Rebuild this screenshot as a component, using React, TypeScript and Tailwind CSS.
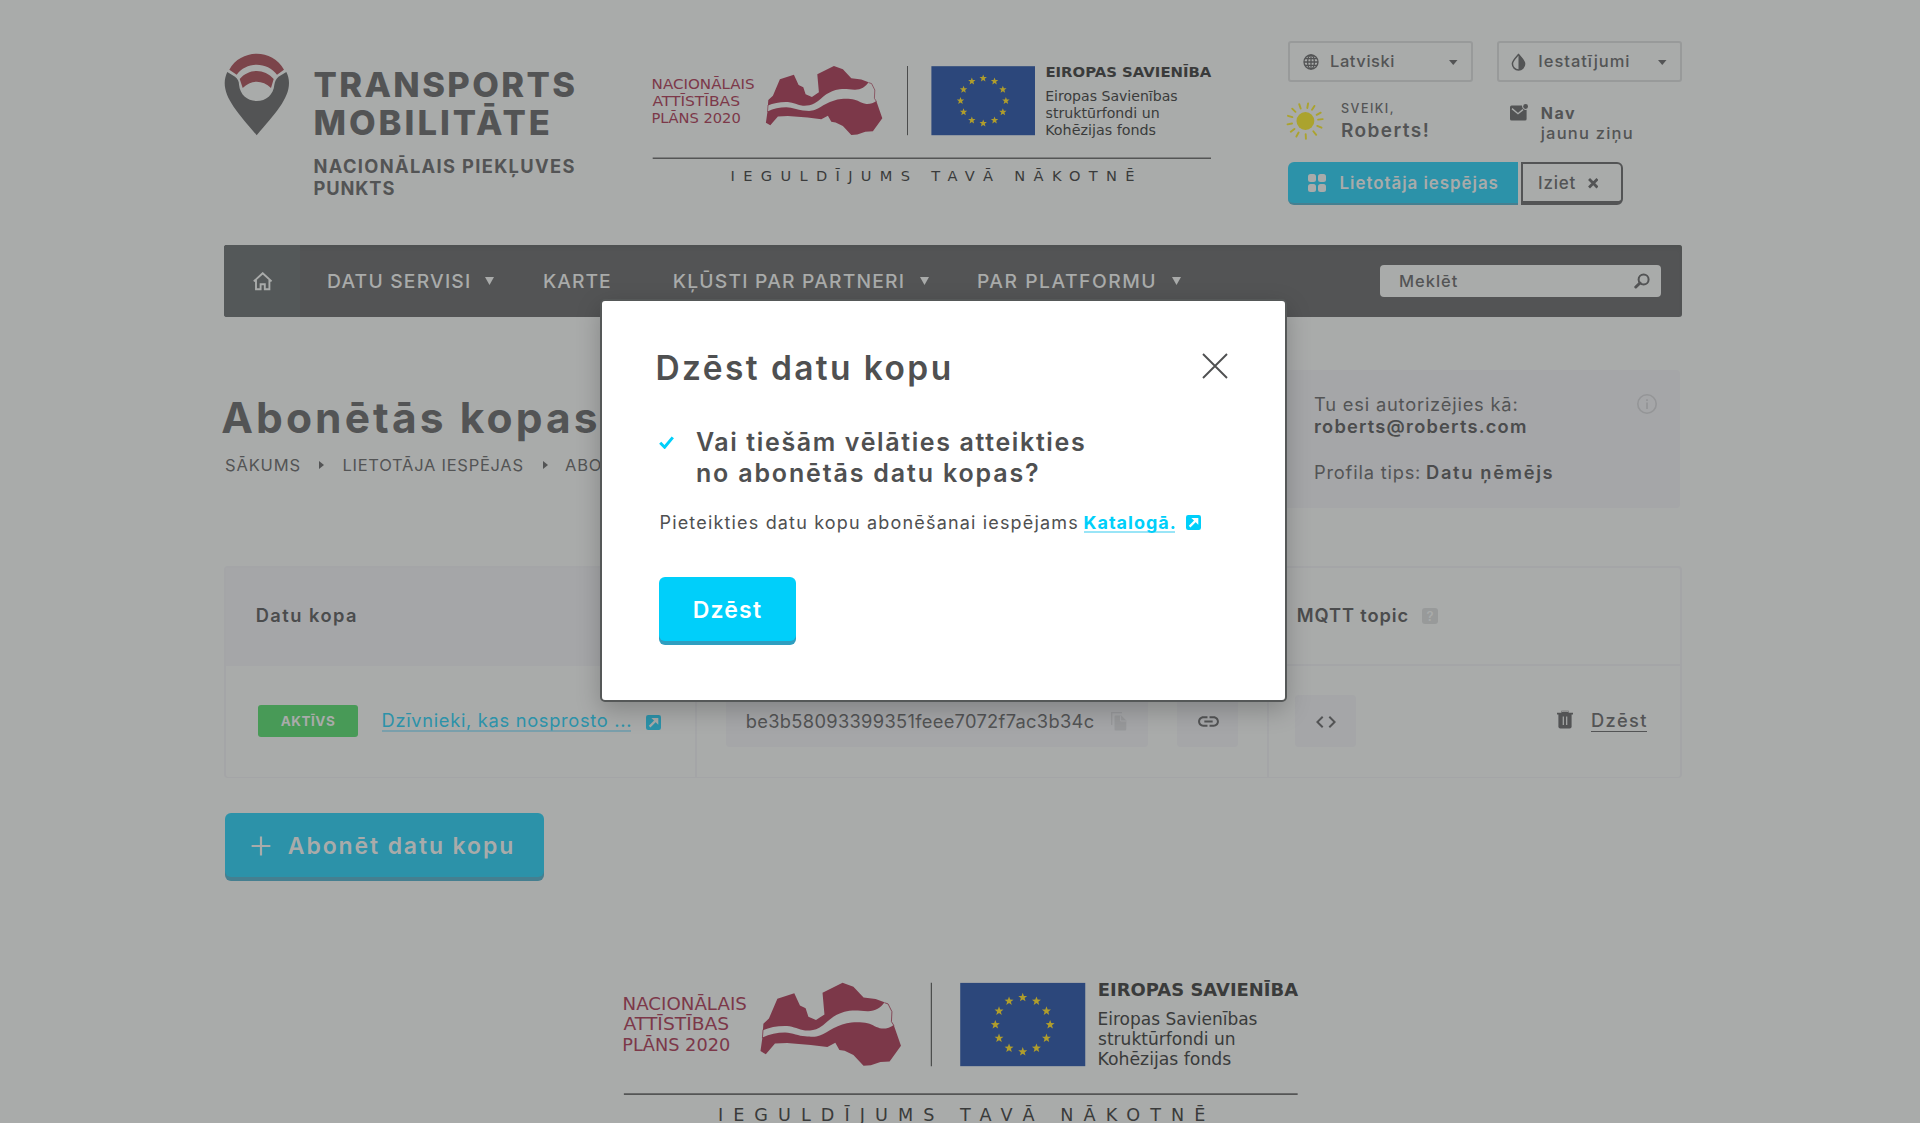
import type { ReactNode } from "react";
import { MdCode, MdLink } from "react-icons/md";

function star(cx: number, cy: number, r: number) {
  return Array.from({ length: 10 }, (_, i) => {
    const a = (Math.PI / 5) * i - Math.PI / 2;
    const q = i % 2 ? r * 0.42 : r;
    return `${(cx + Math.cos(a) * q).toFixed(2)},${(cy + Math.sin(a) * q).toFixed(2)}`;
  }).join(" ");
}

function FundLogo({ className }: { className: string }) {
  const sans = "font-['DejaVu_Sans',sans-serif]";
  return (
    <svg viewBox="652 58 560 130" className={`block shrink-0 ${className}`}>
      <g className={sans} fontSize="14.7" fill="#7c3849">
        <text x="651.6" y="88.5" textLength="103" lengthAdjust="spacingAndGlyphs">NACIONĀLAIS</text>
        <text x="652.4" y="105.5" textLength="87.6" lengthAdjust="spacingAndGlyphs">ATTĪSTĪBAS</text>
        <text x="651.4" y="122.9" textLength="89.4" lengthAdjust="spacingAndGlyphs">PLĀNS 2020</text>
      </g>
      <g fill="#7c3849" transform="translate(-0.4 0)">
        <path d="M780.3 79.3 794.3 74.7 799 85 803.7 87.3 806 94.3 812.3 97 819.3 92.3 817.7 74.3 834.3 66 843.3 69.3 851.7 78.3 861.7 79.6 869 82.3C866 87 861 89.9 855 89.7C849 89.4 846 88.6 840 89.3C834 90.2 830.5 92 826.7 94.3C822.5 97 819.5 101 815 103.3C811 105.4 807 105.9 803.3 105.7C798 105 794 102.4 788.3 102C781 101.7 774 103 768.3 105.4L768.7 100 773.3 95.7Z" />
        <path d="M767.9 111.5C774 108.6 780 107.3 786.7 107.3C793 107.6 798 110.2 803.3 110.5C809 111 812 111.2 815.5 109.8C819.5 108.4 822.5 105.7 826.7 103.7C831.5 101.5 836.5 99.4 841.7 99C846 98.7 851 98.7 855 99.7C859.5 100.8 862.5 103.6 866.7 104C870.5 104.2 874 103.2 876.7 101L882.7 118.3 873.3 131.3 865.7 131.7 857.7 134.5 851.7 134.9 843.3 126 836 122.5 831.7 121.7 828.3 115.7 821.7 119.3 808 117.6 788.3 116 778.3 116.5 770.7 125.3 766.3 122.7Z" />
        <path d="M869 82.6 872 83.6 875.2 90 874.8 98.3 876.9 101.6M768.4 105 767.9 112" fill="none" stroke="#7c3849" strokeWidth="0.7" />
      </g>
      <path d="M907.5 66V135.2" stroke="#4b4c4c" strokeWidth="1" />
      <rect x="931.4" y="66.2" width="103.6" height="69" fill="#2c477b" />
      <g fill="#b09d2c">
        {Array.from({ length: 12 }, (_, i) => (
          <polygon
            key={i}
            points={star(983.2 + Math.sin((i * Math.PI) / 6) * 22.7, 100.8 - Math.cos((i * Math.PI) / 6) * 22.5, 3.9)}
          />
        ))}
      </g>
      <g className={sans} fill="#3a3b3b" fontSize="14">
        <text x="1045.4" y="77.3" fontWeight="700" fontSize="14.2" textLength="166" lengthAdjust="spacingAndGlyphs">EIROPAS SAVIENĪBA</text>
        <text x="1045.2" y="101.1" textLength="132.5" lengthAdjust="spacingAndGlyphs">Eiropas Savienības</text>
        <text x="1045.6" y="117.8" textLength="114" lengthAdjust="spacingAndGlyphs">struktūrfondi un</text>
        <text x="1045.2" y="134.5" textLength="110.8" lengthAdjust="spacingAndGlyphs">Kohēzijas fonds</text>
        <text x="730.6" y="180.6" fontSize="14.6" textLength="404" lengthAdjust="spacing">IEGULDĪJUMS TAVĀ NĀKOTNĒ</text>
      </g>
      <path d="M652.7 158.3H1211" stroke="#545555" strokeWidth="1.4" />
    </svg>
  );
}

function BrandMark() {
  return (
    <svg viewBox="224 53 66 83" className="h-[83px] w-[66px] shrink-0">
      <g fill="#7b444a">
        <path d="M229.3 69.7C241 48.5 272.5 48.5 284 69.7L277 74.7C267.5 61.3 246 61.3 236.7 74.7Z" />
        <path d="M239.7 79C249 68.3 264.5 68.3 273.7 79L271 88C262.5 79.6 251 79.6 242.7 88Z" />
      </g>
      <path
        fill="#535455"
        d="M227.3 72 235 76.7C238 79 239 82 239 84.5C240 95 247.5 101 256.7 101C266 101 273.5 95 274.4 84.5C275 81 276 79 278.5 76.7L286.3 72C288 75 289 79 289 83C289 99 275 113.5 256.7 135.3C238.5 113.5 224.7 99 224.7 83C224.7 79 225.8 75 227.3 72Z"
      />
    </svg>
  );
}

function Sun() {
  const rays = [32, 62, 84, 112, 141, 177, 209, 233, 259, 287, 314, 341, 10];
  return (
    <svg viewBox="-19 -20 38 40" className="h-[40px] w-[38px] shrink-0">
      <circle cx="0.4" cy="0" r="8.9" fill="#aba32e" />
      <g stroke="#aba32e" strokeWidth="1.9" strokeLinecap="round">
        {rays.map((a) => (
          <path key={a} d="M0 -13.2V-17.8" transform={`rotate(${a})`} />
        ))}
      </g>
    </svg>
  );
}

function Caret({ className }: { className: string }) {
  return (
    <svg viewBox="0 0 9 8" preserveAspectRatio="none" className={`shrink-0 fill-current ${className}`}>
      <path d="M0 0H9L4.5 8Z" />
    </svg>
  );
}

function External({ className }: { className: string }) {
  return (
    <svg viewBox="0 0 15 15" className="size-[15px] shrink-0">
      <rect width="15" height="15" rx="2.2" className={className} />
      <path d="M3.6 11.6 9.6 5.6" stroke="currentColor" strokeWidth="2.2" fill="none" />
      <path d="M5.4 3H12.3V9.8Z" fill="currentColor" />
    </svg>
  );
}

function SelectBox({ icon, label }: { icon: ReactNode; label: ReactNode }) {
  return (
    <div className="flex h-[41px] w-[185px] items-center rounded-[3px] border-2 border-[#989a9a] pr-[13.5px] pl-[12.5px]">
      {icon}
      {label}
      <Caret className="mt-px ml-auto h-[5px] w-[8.5px]" />
    </div>
  );
}

function Header() {
  return (
    <header className="flex h-[245px]">
      <div className="flex w-[428px] pt-[53px]">
        <BrandMark />
        <div className="ml-[23.4px] pt-[13px] whitespace-nowrap">
          <div className="text-[34.5px] leading-[38px] font-extrabold tracking-[2.4px]">TRANSPORTS</div>
          <div className="text-[34.5px] leading-[38px] font-extrabold tracking-[3px]">MOBILITĀTE</div>
          <div className="mt-[13.9px] text-[18.3px] leading-[21.8px] font-bold tracking-[1.34px]">NACIONĀLAIS PIEKĻUVES</div>
          <div className="text-[18.3px] leading-[21.8px] font-bold tracking-[0.9px]">PUNKTS</div>
        </div>
      </div>
      <FundLogo className="mt-[58px] h-[130px] w-[560px]" />
      <div className="ml-[76px] w-[394px] pt-[41px] whitespace-nowrap">
        <div className="flex justify-between">
          <SelectBox
            icon={
              <svg viewBox="0 0 16 16" className="size-[16px] shrink-0">
                <g fill="none" stroke="currentColor" strokeWidth="1.3">
                  <circle cx="8" cy="8" r="7" />
                  <ellipse cx="8" cy="8" rx="3.4" ry="7" />
                  <path d="M1 8H15M8 1V15M2 4.6H14M2 11.4H14" />
                </g>
              </svg>
            }
            label={<span className="ml-[11.5px] text-[16.5px] font-medium tracking-[0.56px]">Latviski</span>}
          />
          <SelectBox
            icon={
              <svg viewBox="0 0 15 18" className="-ml-px h-[18px] w-[15px] shrink-0">
                <path d="M7.5 1.6C4.5 5 1.4 7.6 1.4 10.8A6.1 6.1 0 0 0 13.6 10.8C13.6 7.6 10.5 5 7.5 1.6Z" fill="none" stroke="currentColor" strokeWidth="1.5" />
                <path d="M7.5 1.6C10.5 5 13.6 7.6 13.6 10.8A6.1 6.1 0 0 1 7.5 16.9Z" fill="currentColor" />
              </svg>
            }
            label={<span className="ml-[12.8px] text-[16.5px] font-medium tracking-[0.97px]">Iestatījumi</span>}
          />
        </div>
        <div className="mt-[18.5px] flex h-[61.5px]">
          <div className="flex w-[222px]">
            <div className="-ml-[2px]">
              <Sun />
            </div>
            <div className="ml-[17px] pt-px">
              <div className="text-[12.5px] leading-[14px] font-medium tracking-[1.47px]">SVEIKI,</div>
              <div className="mt-[3.4px] text-[19px] leading-[24px] font-semibold tracking-[1.43px]">Roberts!</div>
            </div>
          </div>
          <svg viewBox="0 0 18 17" className="mt-[3.5px] h-[17px] w-[18px] shrink-0">
            <path d="M0 3.2Q0 1.6 1.6 1.6H12Q11.9 5.4 15.6 5.9L16.6 5.8V15Q16.6 16.6 15 16.6H1.6Q0 16.6 0 15Z" fill="currentColor" />
            <path d="M2 4.6 8 9.7 13 5.6" fill="none" stroke="#a9abaa" strokeWidth="1.4" />
            <circle cx="15.6" cy="2.5" r="2.4" fill="currentColor" />
          </svg>
          <div className="ml-[12.7px] pt-[2.7px] text-[16px] leading-[20px]">
            <div className="font-bold tracking-[1.54px]">Nav</div>
            <div className="text-[16.5px] font-medium tracking-[1.22px]">jaunu ziņu</div>
          </div>
        </div>
        <div className="flex gap-[2.6px]">
          <div className="flex h-[43px] w-[230px] items-center rounded-l-[6px] border-b-2 border-[#457f90] bg-[#2c92a9] pl-[20px] text-[#a9abaa]">
            <div className="mt-[1px] grid grid-cols-2 gap-[1.5px]">
              <i className="size-[8.4px] rounded-[2.5px] bg-current" />
              <i className="size-[8.4px] rounded-[2.5px] bg-current" />
              <i className="size-[8.4px] rounded-[2.5px] bg-current" />
              <i className="size-[8.4px] rounded-[2.5px] bg-current" />
            </div>
            <span className="mt-[1.5px] ml-[13.3px] text-[17px] font-semibold tracking-[0.92px]">Lietotāja iespējas</span>
          </div>
          <div className="flex h-[43px] w-[102px] items-center rounded-r-[6px] border-2 border-b-4 border-[#535455] pl-[15.5px]">
            <span className="mt-[1.5px] text-[17px] font-medium tracking-[0.72px]">Iziet</span>
            <svg viewBox="0 0 10 10" className="mt-[1.5px] ml-[12px] size-[10.5px]">
              <path d="M1 1 9 9M9 1 1 9" stroke="currentColor" strokeWidth="2.6" />
            </svg>
          </div>
        </div>
      </div>
    </header>
  );
}

function NavBar() {
  return (
    <nav className="flex h-[72px] items-center overflow-hidden rounded-[3px] bg-[#535455] text-[19.3px] font-medium whitespace-nowrap text-[#a9abaa] shadow-[inset_0_3px_4px_-1px_#4d5150]">
      <div className="flex h-full w-[76px] items-center justify-center bg-[#545859]">
        <svg viewBox="0 0 20 19" className="ml-[2px] h-[19px] w-[20px]">
          <path d="M0.8 9.4 9.7 1.2 18.6 9.4M3 8V17.3H7.6V12.2H11.8V17.3H16.4V8" fill="none" stroke="currentColor" strokeWidth="1.9" />
        </svg>
      </div>
      <span className="ml-[27px] w-[157.5px] tracking-[1.2px]">DATU SERVISI</span>
      <Caret className="h-[8px] w-[9px]" />
      <span className="ml-[49.6px] w-[129.7px] tracking-[1px]">KARTE</span>
      <span className="w-[247.7px] tracking-[1.2px]">KĻŪSTI PAR PARTNERI</span>
      <Caret className="h-[8px] w-[9px]" />
      <span className="ml-[47.5px] w-[194.7px] tracking-[1.5px]">PAR PLATFORMU</span>
      <Caret className="h-[8px] w-[9px]" />
      <div className="mr-[21px] ml-auto flex h-[32px] w-[281px] items-center justify-between rounded-[4px] bg-[#a9abaa] pr-[11.5px] pl-[19px] text-[16.5px] tracking-[0.98px] text-[#535455]">
        Meklēt
        <svg viewBox="0 0 16 16" className="size-[16px]">
          <circle cx="9.6" cy="6.4" r="5" fill="none" stroke="currentColor" strokeWidth="2" />
          <path d="M6 10 1.8 14" stroke="currentColor" strokeWidth="3" strokeLinecap="round" />
        </svg>
      </div>
    </nav>
  );
}

function Crumb() {
  return (
    <svg viewBox="0 0 5 8" className="mt-px h-[8px] w-[5px]">
      <path d="M0 0 5 4 0 8Z" fill="currentColor" />
    </svg>
  );
}

function PageHead() {
  return (
    <section className="flex justify-between whitespace-nowrap">
      <div className="pt-[76.5px]">
        <h1 className="-ml-[2.8px] text-[42.5px] leading-[48px] font-bold tracking-[3.1px]">Abonētās kopas</h1>
        <div className="mt-[13px] flex items-center pl-[1.1px] text-[16.5px] leading-[20px]">
          <span className="w-[94.4px] tracking-[0.81px]">SĀKUMS</span>
          <Crumb />
          <span className="ml-[18px] w-[200.6px] tracking-[0.73px]">LIETOTĀJA IESPĒJAS</span>
          <Crumb />
          <span className="ml-[17px] tracking-[0.8px]">ABONĒTĀS</span>
        </div>
      </div>
      <aside className="mt-[53px] mr-[2px] flex h-[138px] w-[400px] justify-between rounded-[4px] bg-[#a5a6a8] pt-[24.2px] pr-[23px] pl-[34px] text-[18.3px] leading-[21.9px]">
        <div>
          <p className="tracking-[0.8px]">Tu esi autorizējies kā:</p>
          <p className="font-semibold tracking-[1.21px] text-[#4b4c4d]">roberts@roberts.com</p>
          <p className="mt-[24px] tracking-[0.8px]">
            Profila tips: <b className="-ml-px font-semibold tracking-[1.65px] text-[#4b4c4d]">Datu ņēmējs</b>
          </p>
        </div>
        <svg viewBox="0 0 20 20" className="size-[20px] text-[#949597]">
          <circle cx="10" cy="10" r="9.2" fill="none" stroke="currentColor" strokeWidth="1.6" />
          <path d="M10 8.4V15M10 5.2V7" stroke="currentColor" strokeWidth="1.8" />
        </svg>
      </aside>
    </section>
  );
}

function DataTable() {
  return (
    <section className="mt-[58px] h-[212px] overflow-hidden rounded-[4px] border-2 border-b border-[#a4a5a7] whitespace-nowrap">
      <div className="flex h-[98px] text-[18.3px] leading-[22px] font-semibold text-[#4b4c4d]">
        <div className="w-[471px] bg-[#a5a6a8] pt-[35.8px] pl-[29.7px] tracking-[1.47px]">Datu kopa</div>
        <div className="w-[572px] border-b-2 border-[#a4a5a7]" />
        <div className="flex flex-1 border-b-2 border-[#a4a5a7] pt-[35.8px] pl-[27.7px]">
          <span className="w-[125.3px] tracking-[0.9px]">MQTT topic</span>
          <span className="mt-[4px] flex size-[16px] items-center justify-center rounded-[3px] bg-[#989a9a] text-[13px] text-[#a9abaa]">?</span>
        </div>
      </div>
      <div className="flex h-[111px] text-[18.3px]">
        <div className="flex w-[471px] border-r-2 border-[#a4a5a7] pl-[32px]">
          <span className="mt-[39px] flex h-[32px] w-[100px] items-center justify-center rounded-[3px] bg-[#489a57] text-[13.5px] font-bold tracking-[0.53px] text-[#a9abaa]">AKTĪVS</span>
          <a className="mt-[42.6px] ml-[23.5px] h-[23px] w-[249.5px] border-b-2 border-[#7a9fab] leading-[23px] tracking-[0.69px] text-[#2c92a9]">Dzīvnieki, kas nosprosto ...</a>
          <div className="mt-[49px] ml-[15px] text-[#a9abaa]">
            <External className="fill-[#2c92a9]" />
          </div>
        </div>
        <div className="flex w-[572px] border-r-2 border-[#a4a5a7] pt-[29px] pl-[29.4px]">
          <div className="flex h-[52px] w-[422px] items-center rounded-[4px] bg-[#a5a6a8] pl-[19.4px] tracking-[0.31px]">
            <span className="mt-[1.5px]">be3b58093399351feee7072f7ac3b34c</span>
            <svg viewBox="0 0 16 19" className="ml-[17px] h-[19px] w-[16px] text-[#98999b]">
              <path d="M0.7 13V0.7H11" fill="none" stroke="currentColor" strokeWidth="1.3" />
              <path d="M3.5 4.8Q3.5 3.4 4.9 3.4H10.2L15.3 8.6V17Q15.3 18.6 13.8 18.6H4.9Q3.5 18.6 3.5 17Z" fill="currentColor" />
              <path d="M9.6 3.6V9H15" fill="none" stroke="#a5a6a8" strokeWidth="1" />
            </svg>
          </div>
          <div className="ml-[29px] flex h-[52px] w-[61px] items-center justify-center rounded-[4px] bg-[#a5a6a8]">
            <MdLink className="ml-px size-[25px]" />
          </div>
        </div>
        <div className="flex flex-1 pt-[29px] pl-[26.3px]">
          <div className="flex h-[52px] w-[61px] items-center justify-center rounded-[4px] bg-[#a5a6a8]">
            <MdCode className="mt-px ml-px size-[24px]" />
          </div>
          <svg viewBox="0 0 16 19" className="mt-[15px] ml-[200.7px] h-[19px] w-[16px]">
            <path d="M0 2.7H16V4.4H0ZM4.4 3V0.8H11.6V3" fill="currentColor" />
            <path d="M5 2V1.4H11V2" stroke="#a9abaa" strokeWidth="0.8" fill="none" />
            <path d="M1.4 4H14.6V16.4Q14.6 18.4 12.6 18.4H3.4Q1.4 18.4 1.4 16.4Z" fill="currentColor" />
            <path d="M6.3 6.6V15M9.7 6.6V15" stroke="#a9abaa" strokeWidth="1.2" />
          </svg>
          <a className="mt-[13.6px] ml-[18px] h-[23px] w-[56px] border-b border-[#535455] leading-[23px] font-medium tracking-[1.4px]">Dzēst</a>
        </div>
      </div>
    </section>
  );
}

function Dialog() {
  return (
    <div className="absolute top-[299px] left-[600px] h-[403px] w-[687px] rounded-[5px] border-2 border-[#555858] bg-white pt-[46.8px] pl-[53.5px] whitespace-nowrap text-[#4f5051] shadow-[0_8px_24px_rgba(0,0,0,0.22)]">
      <div className="flex items-start justify-between pr-[57.2px]">
        <h2 className="text-[33.5px] leading-[40px] font-semibold tracking-[2.4px]">Dzēst datu kopu</h2>
        <svg viewBox="0 0 26 26" className="mt-[5.5px] size-[26px]">
          <path d="M1 1 25 25M25 1 1 25" stroke="currentColor" strokeWidth="1.9" />
        </svg>
      </div>
      <div className="mt-[39.4px] flex">
        <svg viewBox="0 0 15 13" className="mt-[9.3px] ml-[3.7px] h-[13px] w-[15px]">
          <path d="M1.2 6.8 5.6 11.2 13.8 1.4" fill="none" stroke="#00cffa" strokeWidth="3" />
        </svg>
        <div className="ml-[21.7px] text-[25px] leading-[31px] font-semibold">
          <p className="tracking-[1.63px]">Vai tiešām vēlāties atteikties</p>
          <p className="tracking-[1.84px]">no abonētās datu kopas?</p>
        </div>
      </div>
      <div className="mt-[22.2px] flex pl-[4px] text-[18px] leading-[23px]">
        <p className="w-[424px] tracking-[1.17px]">Pieteikties datu kopu abonēšanai iespējams</p>
        <a className="h-[22px] w-[91px] border-b-2 border-[#99e5f7] leading-[23px] font-bold tracking-[1px] text-[#00cffa]">Katalogā.</a>
        <div className="mt-[4px] ml-[11.5px] text-white">
          <External className="fill-[#00cffa]" />
        </div>
      </div>
      <button className="mt-[42.6px] ml-[3.5px] flex h-[64px] w-[137px] items-center justify-center rounded-[6px] bg-[#00cffa] pt-[2.5px] text-[23px] font-semibold tracking-[1.2px] text-white shadow-[0_4px_0_#2f9ec0]">
        Dzēst
      </button>
    </div>
  );
}

export default function App() {
  return (
    <div className="relative h-[1123px] w-[1920px] overflow-hidden bg-[#a9abaa] font-['Inter',sans-serif] text-[#535455]">
      <div className="ml-[224px] w-[1458px]">
        <Header />
        <NavBar />
        <PageHead />
        <DataTable />
        <button className="mt-[35px] ml-px flex h-[64px] w-[319px] items-center rounded-[6px] bg-[#2c92a9] pl-[26px] text-[23px] font-semibold tracking-[1.88px] whitespace-nowrap text-[#a9abaa] shadow-[0_4px_0_#457f90]">
          <svg viewBox="0 0 20 20" className="mt-[2px] mr-[16.8px] size-[20px]">
            <path d="M10 0.6V19.4M0.6 10H19.4" stroke="currentColor" strokeWidth="2.2" />
          </svg>
          <span className="mt-[1.5px]">Abonēt datu kopu</span>
        </button>
        <FundLogo className="mt-[96.3px] ml-[398.7px] h-[156.9px] w-[675.9px]" />
      </div>
      <Dialog />
    </div>
  );
}
